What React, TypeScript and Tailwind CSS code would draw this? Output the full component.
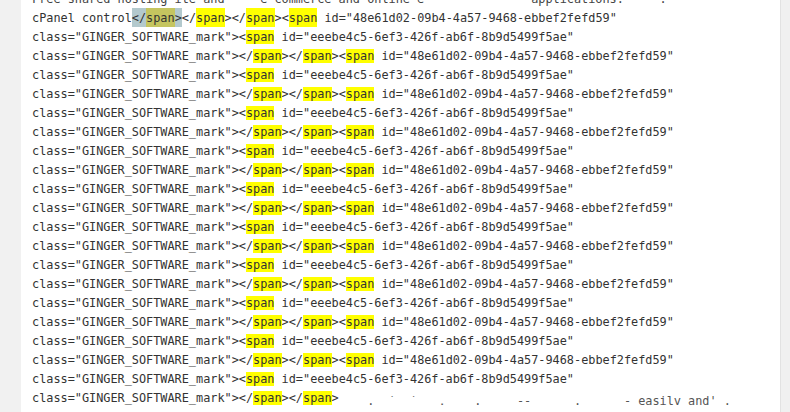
import React from "react";

const Y = ({ children, tall }: { children: React.ReactNode; tall?: boolean }) => (
  <span className={tall ? "bg-[#ffff00] py-[2.5px]" : "bg-[#ffff00]"}>{children}</span>
);

const ID_A = "48e61d02-09b4-4a57-9468-ebbef2fefd59";
const ID_B = "eeebe4c5-6ef3-426f-ab6f-8b9d5499f5ae";
const CLS = 'class="GINGER_SOFTWARE_mark">';
const GLITCH = "    .  `  `   ,    .     --      .  ".padEnd(40, " ") + "- easily and' .";

function LineB() {
  return (
    <div>
      {CLS}&lt;<Y>span</Y> id="{ID_B}"
    </div>
  );
}

function LineA({ last }: { last?: boolean }) {
  return (
    <div>
      {CLS}&lt;/<Y>span</Y>&gt;&lt;/<Y>span</Y>&gt;
      {last ? (
        <span className="inline-block h-[9px] overflow-hidden align-[-3px] text-[#555]">
          <span className="block -mt-[4px]">{GLITCH}</span>
        </span>
      ) : (
        <>
          &lt;<Y>span</Y> id="{ID_A}"
        </>
      )}
    </div>
  );
}

export default function App() {
  const rows: React.ReactNode[] = [];
  for (let i = 0; i < 20; i++) {
    if (i % 2 === 0) rows.push(<LineB key={i} />);
    else rows.push(<LineA key={i} last={i === 19} />);
  }
  return (
    <div className="flex h-[412px] w-[790px] overflow-hidden bg-white">
      <div className="w-[21px] shrink-0 bg-[#f1f1f1]" />
      <div className="flex-1 overflow-hidden bg-white pl-[11px]">
        <div
          className="-mt-[10.5px] whitespace-pre text-[11.85px] leading-[19px] text-[#333]"
          style={{ fontFamily: '"DejaVu Sans Mono", "Liberation Mono", monospace' }}
        >
          <div className="text-[#444]">
            {"Free shared hosting ite and     e-commerce and online e               applications.     ."}
          </div>
          <div>
            cPanel control
            <span className="bg-[#b3c9cd] py-[2.5px]">&lt;/</span>
            <span className="bg-[#c5c55f] py-[2.5px]">span</span>
            <span className="bg-[#b3c9cd] py-[2.5px]">&gt;</span>
            &lt;/<Y tall>span</Y>&gt;&lt;/<Y tall>span</Y>&gt;&lt;<Y tall>span</Y> id="{ID_A}"
          </div>
          {rows}
        </div>
      </div>
      <div className="w-[10px] shrink-0 border-l border-[#e2e2e2] bg-[#f0f0f0]" />
    </div>
  );
}
